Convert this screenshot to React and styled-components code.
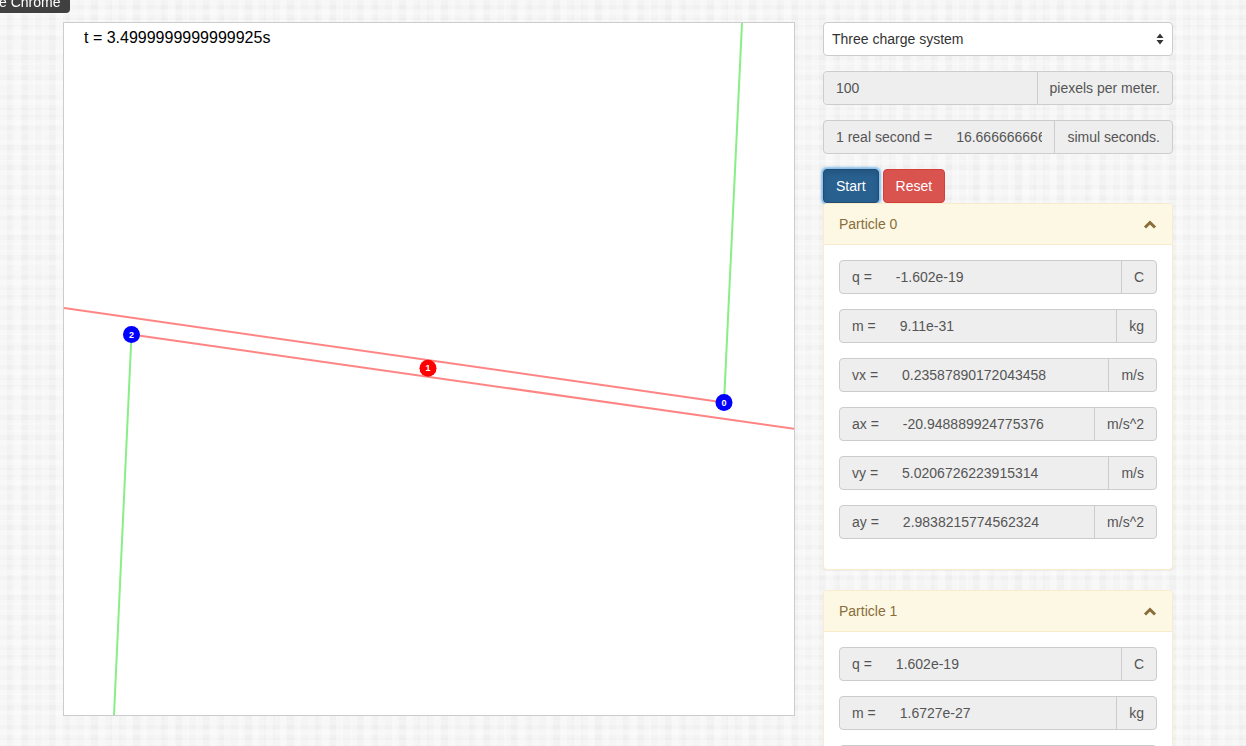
import React from "react";
import styled, { createGlobalStyle } from "styled-components";

const GlobalStyle = createGlobalStyle`
  html, body {
    margin: 0;
    overflow: hidden;
  }
  body {
    font-family: "Liberation Sans", Arial, sans-serif;
    font-size: 14px;
    color: #333;
    background-color: #f4f4f4;
    background-image:
      linear-gradient(90deg, rgba(255, 255, 255, 0.35) 50%, transparent 50%),
      linear-gradient(rgba(255, 255, 255, 0.3) 50%, transparent 50%),
      linear-gradient(90deg, rgba(0, 0, 0, 0.012) 50%, transparent 50%),
      linear-gradient(rgba(0, 0, 0, 0.012) 50%, transparent 50%);
    background-size: 14px 14px, 10px 10px, 22px 22px, 18px 18px;
  }
`;

const Tooltip = styled.div`
  position: fixed;
  top: 0;
  left: 0;
  width: 70px;
  height: 13px;
  overflow: hidden;
  background: #404040;
  border-bottom-right-radius: 4px;
  color: #fff;
  font-size: 14px;
  line-height: 14px;
  white-space: nowrap;

  span {
    display: block;
    margin: -5px 0 0 -1px;
  }
`;

const Page = styled.div`
  display: flex;
  align-items: flex-start;
  gap: 28px;
  padding: 22px 0 0 63px;
`;

const CanvasBox = styled.div`
  width: 732px;
  height: 694px;
  box-sizing: border-box;
  border: 1px solid #ccc;
  background: #fff;

  svg {
    display: block;
  }
`;

const Sidebar = styled.div`
  width: 350px;
  display: flex;
  flex-direction: column;
`;

const SelectBox = styled.div`
  height: 34px;
  box-sizing: border-box;
  margin-bottom: 15px;
  padding: 0 8px;
  display: flex;
  align-items: center;
  justify-content: space-between;
  background: #fff;
  border: 1px solid #ccc;
  border-radius: 4px;
  color: #333;
  font-size: 14px;
`;

const InputGroup = styled.div`
  display: flex;
  height: 34px;
  box-sizing: border-box;
  margin-bottom: 15px;
  border: 1px solid #ccc;
  border-radius: 4px;
  overflow: hidden;
  background: #eee;

  & > * + * {
    border-left: 1px solid #ccc;
  }
`;

const Addon = styled.span`
  flex: none;
  padding: 6px 12px;
  line-height: 20px;
  font-size: 14px;
  color: #555;
  text-align: center;
  white-space: nowrap;
`;

const Field = styled.input`
  flex: 1;
  min-width: 0;
  box-sizing: border-box;
  margin: 0;
  padding: 6px 12px;
  border: 0;
  background: #eee;
  color: #555;
  font-family: "Liberation Sans", Arial, sans-serif;
  font-size: 14px;
  line-height: 20px;
  outline: none;
`;

const ButtonRow = styled.div`
  display: flex;
  gap: 4px;
`;

const Button = styled.button`
  height: 34px;
  box-sizing: border-box;
  padding: 6px 12px;
  border-radius: 4px;
  border: 1px solid ${(p) => (p.$variant === "danger" ? "#d43f3a" : "#204d74")};
  background: ${(p) => (p.$variant === "danger" ? "#d9534f" : "#286090")};
  color: #fff;
  font-family: "Liberation Sans", Arial, sans-serif;
  font-size: 14px;
  line-height: 20px;
  box-shadow: ${(p) =>
    p.$focused
      ? "0 0 2px 2px rgba(102, 175, 233, 0.75), inset 0 3px 5px rgba(0, 0, 0, 0.125)"
      : "none"};
`;

const Panel = styled.div`
  margin-bottom: 20px;
  background: #fff;
  border: 1px solid #faebcc;
  border-radius: 4px;
  box-shadow: 0 1px 1px rgba(0, 0, 0, 0.05);
`;

const PanelHeading = styled.div`
  display: flex;
  align-items: center;
  justify-content: space-between;
  padding: 10px 15px;
  line-height: 20px;
  background: #fcf8e3;
  border-bottom: 1px solid #faebcc;
  border-radius: 3px 3px 0 0;
  color: #8a6d3b;
  font-size: 14px;
`;

const PanelBody = styled.div`
  padding: 15px;
`;

const Particle = ({ x, y, color, label }) => (
  <g>
    <circle cx={x} cy={y} r="8.5" fill={color} />
    <text
      x={x}
      y={y + 3}
      fill="#fff"
      fontSize="9"
      fontWeight="bold"
      fontFamily="Liberation Sans, Arial, sans-serif"
      textAnchor="middle"
    >
      {label}
    </text>
  </g>
);

const Chevron = () => (
  <svg width="14" height="10" viewBox="0 0 14 10">
    <path d="M2 8.5 L7 3.5 L12 8.5" fill="none" stroke="#8a6d3b" strokeWidth="3" />
  </svg>
);

const SelectArrows = () => (
  <svg width="8" height="12" viewBox="0 0 8 12">
    <path d="M4 0.5 L7.5 5 L0.5 5 Z M4 11.5 L7.5 7 L0.5 7 Z" fill="#333" />
  </svg>
);

const particles = [
  {
    name: "Particle 0",
    rows: [
      ["q =", "-1.602e-19", "C"],
      ["m =", "9.11e-31", "kg"],
      ["vx =", "0.23587890172043458", "m/s"],
      ["ax =", "-20.948889924775376", "m/s^2"],
      ["vy =", "5.0206726223915314", "m/s"],
      ["ay =", "2.9838215774562324", "m/s^2"],
    ],
  },
  {
    name: "Particle 1",
    rows: [
      ["q =", "1.602e-19", "C"],
      ["m =", "1.6727e-27", "kg"],
      ["vx =", "0.0001284630172043", "m/s"],
      ["ax =", "0.011409826775376", "m/s^2"],
      ["vy =", "0.0002734223915314", "m/s"],
      ["ay =", "-0.00162515774562", "m/s^2"],
    ],
  },
];

const Simulation = () => (
  <CanvasBox>
    <svg width="730" height="692" viewBox="0 0 730 692">
      <line x1="0" y1="285" x2="660" y2="379.5" stroke="#ff8484" strokeWidth="2" />
      <line x1="67.5" y1="311.5" x2="731" y2="406" stroke="#ff8484" strokeWidth="2" />
      <line x1="660" y1="379.5" x2="678" y2="0" stroke="#88ee88" strokeWidth="2" />
      <line x1="67.5" y1="311.5" x2="50" y2="692" stroke="#88ee88" strokeWidth="2" />
      <Particle x={660} y={379.5} color="#0000ff" label="0" />
      <Particle x={364} y={345.3} color="#ff0000" label="1" />
      <Particle x={67.5} y={311.5} color="#0000ff" label="2" />
      <text x="20" y="20" fontSize="16" fontFamily="Liberation Sans, Arial, sans-serif" fill="#000">
        t = 3.4999999999999925s
      </text>
    </svg>
  </CanvasBox>
);

const App = () => (
  <>
    <GlobalStyle />
    <Tooltip>
      <span>e Chrome</span>
    </Tooltip>
    <Page>
      <Simulation />
      <Sidebar>
        <SelectBox>
          <span>Three charge system</span>
          <SelectArrows />
        </SelectBox>
        <InputGroup>
          <Field readOnly value="100" />
          <Addon>piexels per meter.</Addon>
        </InputGroup>
        <InputGroup>
          <Addon>1 real second =</Addon>
          <Field readOnly value="16.666666666666668" />
          <Addon>simul seconds.</Addon>
        </InputGroup>
        <ButtonRow>
          <Button $focused>Start</Button>
          <Button $variant="danger">Reset</Button>
        </ButtonRow>
        {particles.map((p) => (
          <Panel key={p.name}>
            <PanelHeading>
              <span>{p.name}</span>
              <Chevron />
            </PanelHeading>
            <PanelBody>
              {p.rows.map(([label, value, unit]) => (
                <InputGroup key={label}>
                  <Addon>{label}</Addon>
                  <Field readOnly value={value} />
                  <Addon>{unit}</Addon>
                </InputGroup>
              ))}
            </PanelBody>
          </Panel>
        ))}
      </Sidebar>
    </Page>
  </>
);

export default App;
